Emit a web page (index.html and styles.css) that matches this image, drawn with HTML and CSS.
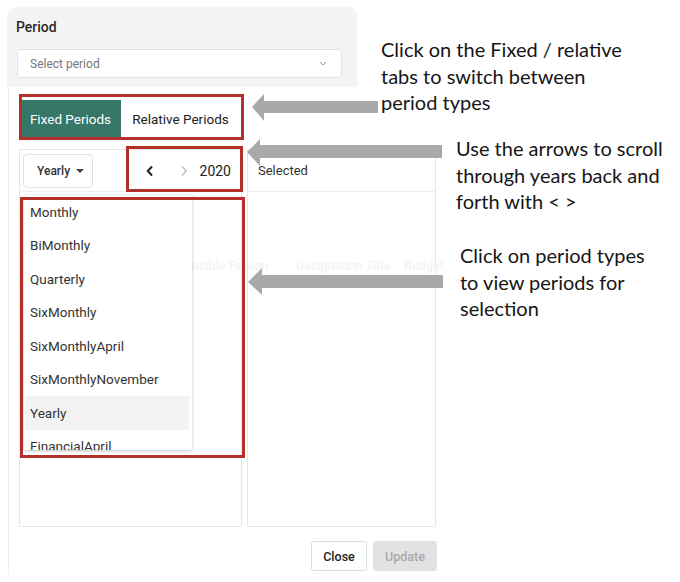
FILE: index.html
```html
<!DOCTYPE html>
<html>
<head>
<meta charset="utf-8">
<link rel="stylesheet" href="styles.css">
</head>
<body>
<div class="page">
  <div class="filter">
    <div class="filter-label">Period</div>
    <div class="select">
      <span>Select period</span>
      <svg class="chev" width="8" height="5" viewBox="0 0 8 5"><polyline points="1,1 4,4 7,1" fill="none" stroke="#999" stroke-width="1"/></svg>
    </div>
  </div>

  <div class="modal">
    <div class="tabs">
      <div class="tab tab-active">Fixed Periods</div>
      <div class="tab">Relative Periods</div>
    </div>

    <div class="ghost">
      <span class="g1">Responsible Person</span>
      <span class="g2">Designation Title</span>
      <span class="g3">Budget</span>
    </div>

    <div class="columns">
      <div class="col col-left">
        <div class="col-head">
          <div class="type-btn">Yearly <span class="caret"></span></div>
          <div class="year-nav">
            <svg class="nav-prev" width="8" height="12" viewBox="0 0 8 12"><polyline points="6,1.5 1.8,6 6,10.5" fill="none" stroke="#222" stroke-width="2"/></svg>
            <svg class="nav-next" width="8" height="12" viewBox="0 0 8 12"><polyline points="2,1.5 6.2,6 2,10.5" fill="none" stroke="#bbb" stroke-width="1.4"/></svg>
            <span class="year">2020</span>
          </div>
        </div>
        <div class="menu">
          <div class="item">Monthly</div>
          <div class="item">BiMonthly</div>
          <div class="item">Quarterly</div>
          <div class="item">SixMonthly</div>
          <div class="item">SixMonthlyApril</div>
          <div class="item">SixMonthlyNovember</div>
          <div class="item item-active">Yearly</div>
          <div class="item">FinancialApril</div>
        </div>
      </div>
      <div class="col col-right">
        <div class="col-head col-head-sel">Selected</div>
      </div>
    </div>

    <div class="footer">
      <div class="btn btn-close">Close</div>
      <div class="btn btn-update">Update</div>
    </div>
  </div>

  <div class="redbox rb1"></div>
  <div class="redbox rb2"></div>
  <div class="redbox rb3"></div>

  <svg class="arrows" width="680" height="582" viewBox="0 0 680 582">
    <polygon points="252,107 264,94 264,101 378,101 378,113 264,113 264,121" fill="#a9a9a9"/>
    <polygon points="247,152 260,139 260,145 442,145 442,158 260,158 260,166" fill="#a9a9a9"/>
    <polygon points="248,282 262,268 262,275 443,275 443,288 262,288 262,295" fill="#a9a9a9"/>
  </svg>

  <div class="note note1">Click on the Fixed / relative<br>tabs to switch between<br>period types</div>
  <div class="note note2">Use the arrows to scroll<br>through years back and<br>forth with &lt; &gt;</div>
  <div class="note note3">Click on period types<br>to view periods for<br>selection</div>
</div>
</body>
</html>
```

FILE: styles.css
```css
* { box-sizing: border-box; }
body { margin: 0; background: #fff; font-family: Roboto, "Liberation Sans", sans-serif; color: #2b2b2b; }
.page { position: relative; width: 680px; height: 582px; overflow: hidden; padding-top: 7px; }

.filter {
  margin: 0 0 0 7px;
  width: 350px;
  height: 80px;
  background: #f4f4f4;
  border-radius: 9px 9px 0 0;
  padding: 12px 15px 0 9px;
}
.filter-label { font-size: 14px; font-weight: 500; line-height: 16px; color: #2a2a2a; }
.select {
  margin: 14px 0 0 1px;
  height: 29px;
  background: #fff;
  border: 1px solid #e3e3e3;
  border-radius: 4px;
  display: flex;
  align-items: center;
  justify-content: space-between;
  padding: 0 14px 0 12px;
  font-size: 12px;
  color: #777;
}

.modal {
  position: relative;
  margin-left: 8px;
  width: 438px;
  height: 488px;
  background: #fff;
  border-left: 1px solid #efefef;
  padding: 13px 9px 0 11px;
}
.tabs { display: flex; height: 37px; }
.tab {
  display: flex; align-items: center; justify-content: center;
  font-size: 13.5px; color: #222; width: 119px;
}
.tab-active { width: 101px; background: #367767; color: #fff; }

.columns { display: flex; gap: 5px; margin: 12px 0 0 -1px; height: 378px; }
.col { position: relative; border: 1px solid #e6e6e6; border-radius: 2px; }
.col-left { width: 223px; }
.col-right { width: 189px; }
.col-head {
  height: 42px;
  border-bottom: 1px solid #eeeeee;
  display: flex; align-items: center;
  padding: 0 10px 0 3px;
}
.col-head-sel { padding-left: 10px; font-size: 13px; color: #333; }
.type-btn {
  width: 70px; height: 34px;
  border: 1px solid #e3e3e3; border-radius: 4px;
  display: flex; align-items: center;
  padding-left: 13px;
  font-size: 12px; font-weight: 500; color: #333;
}
.caret {
  display: inline-block; margin-left: 6px;
  border-left: 4px solid transparent; border-right: 4px solid transparent;
  border-top: 4px solid #444;
}
.year-nav { margin-left: auto; display: flex; align-items: center; }
.nav-prev { margin-right: 26px; }
.nav-next { margin-right: 12px; }
.year { font-size: 14px; color: #222; }

.menu {
  position: absolute; z-index: 3;
  left: 4px; top: 45px;
  width: 168px; height: 255px;
  overflow: hidden;
  background: #fff;
  box-shadow: 0 1px 3px rgba(0,0,0,0.25);
}
.item { height: 33.5px; display: flex; align-items: center; padding-left: 6px; font-size: 13.5px; color: #333; }
.item-active { background: #f3f3f3; margin: 0 3px 0 1px; padding-left: 5px; }

.ghost {
  position: absolute; z-index: 2;
  top: 171px; left: 0; width: 437px; height: 16px;
  font-size: 12.5px; font-weight: 500; color: #f3f3f3;
  white-space: nowrap; overflow: hidden;
}
.ghost span { position: absolute; top: 0; }
.g1 { left: 148px; }
.g2 { left: 287px; }
.g3 { left: 395px; }

.footer { display: flex; justify-content: flex-end; gap: 6px; margin-top: 14px; }
.btn { height: 30px; display: flex; align-items: center; justify-content: center; border-radius: 3px; font-size: 12.5px; font-weight: 500; }
.btn-close { width: 56px; border: 1px solid #dcdcdc; color: #222; background: #fff; }
.btn-update { width: 64px; background: #e2e2e2; color: #a9a9a9; }

.redbox { position: absolute; border: 3px solid #b3302b; z-index: 5; }
.rb1 { left: 19px; top: 94px; width: 225px; height: 46px; }
.rb2 { left: 126px; top: 146px; width: 117px; height: 46px; }
.rb3 { left: 20px; top: 197px; width: 225px; height: 261px; }

.arrows { position: absolute; left: 0; top: 0; z-index: 6; }

.note {
  position: absolute;
  font-family: Lato, "Open Sans", sans-serif;
  font-size: 20px; line-height: 26.5px; color: #161616;
  white-space: nowrap;
}
.note1 { left: 381px; top: 36px; }
.note2 { left: 456px; top: 135px; }
.note3 { left: 460px; top: 242px; }
```
